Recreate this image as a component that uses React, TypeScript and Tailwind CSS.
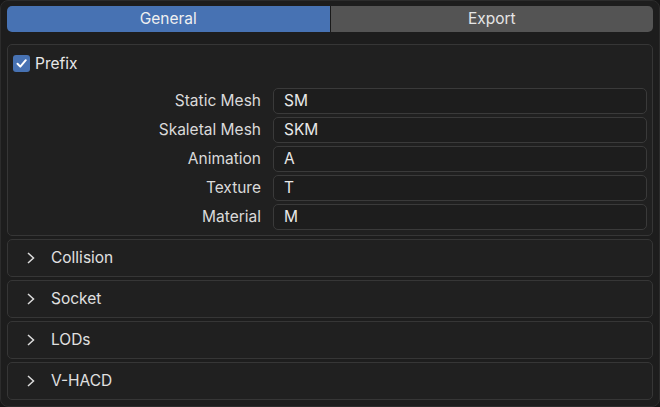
import React from "react";

const rows: [string, string][] = [
  ["Static Mesh", "SM"],
  ["Skaletal Mesh", "SKM"],
  ["Animation", "A"],
  ["Texture", "T"],
  ["Material", "M"],
];

const collapsed = ["Collision", "Socket", "LODs", "V-HACD"];

function Chevron() {
  return (
    <svg width="10" height="14" viewBox="0 0 10 14" className="shrink-0">
      <polyline points="2,2 7.5,7 2,12" fill="none" stroke="#dcdcdc" strokeWidth="1.5" strokeLinejoin="miter" />
    </svg>
  );
}

export default function App() {
  return (
    <div
      className="w-[660px] h-[407px] bg-[#161616] text-[#e2e2e2]"
      style={{ fontFamily: "Inter, 'Noto Sans', sans-serif" }}
    >
      <div className="w-full h-full rounded-[8px] border border-[#2c2c2c] bg-[#1d1d1d] px-[6px] pt-[5px] flex flex-col">
        {/* Tabs */}
        <div className="flex h-[26px] gap-px rounded-[5px] overflow-hidden bg-[#1a1a1a] text-[15.5px]">
          <div className="flex-1 flex items-center justify-center bg-[#4772b3] text-[#f0f0f0]">General</div>
          <div className="flex-1 flex items-center justify-center bg-[#545454] text-[#e6e6e6]">Export</div>
        </div>

        {/* Prefix panel */}
        <div className="mt-[12px] rounded-[5px] border border-[#363636] bg-[#202020] pb-[5px]">
          <div className="h-[37px] flex items-center pl-[5px] gap-[5px]">
            <div className="w-[17px] h-[17px] rounded-[3px] bg-[#4772b3] flex items-center justify-center">
              <svg width="13" height="13" viewBox="0 0 13 13">
                <polyline points="2.5,6.8 5.3,9.6 10.8,3.2" fill="none" stroke="#ffffff" strokeWidth="2" strokeLinecap="round" strokeLinejoin="round" />
              </svg>
            </div>
            <span className="text-[15.5px] text-[#e8e8e8]">Prefix</span>
          </div>
          <div className="mt-[6px] flex flex-col gap-[3px] pr-[5px]">
            {rows.map(([label, value]) => (
              <div key={label} className="flex items-center h-[26px]">
                <div className="w-[253px] text-right text-[15.5px] text-[#dadada]">{label}</div>
                <div className="ml-[12px] flex-1 h-[26px] rounded-[5px] border border-[#3a3a3a] bg-[#1d1d1d] flex items-center pl-[10px] text-[15.5px] text-[#e8e8e8]">
                  {value}
                </div>
              </div>
            ))}
          </div>
        </div>

        {/* Collapsed panels */}
        <div className="mt-[3px] flex flex-col gap-[3px]">
          {collapsed.map((name) => (
            <div
              key={name}
              className="h-[38px] rounded-[5px] border border-[#363636] bg-[#202020] flex items-center pl-[18px] gap-[15px]"
            >
              <Chevron />
              <span className="text-[15.5px] text-[#e0e0e0]">{name}</span>
            </div>
          ))}
        </div>
      </div>
    </div>
  );
}
